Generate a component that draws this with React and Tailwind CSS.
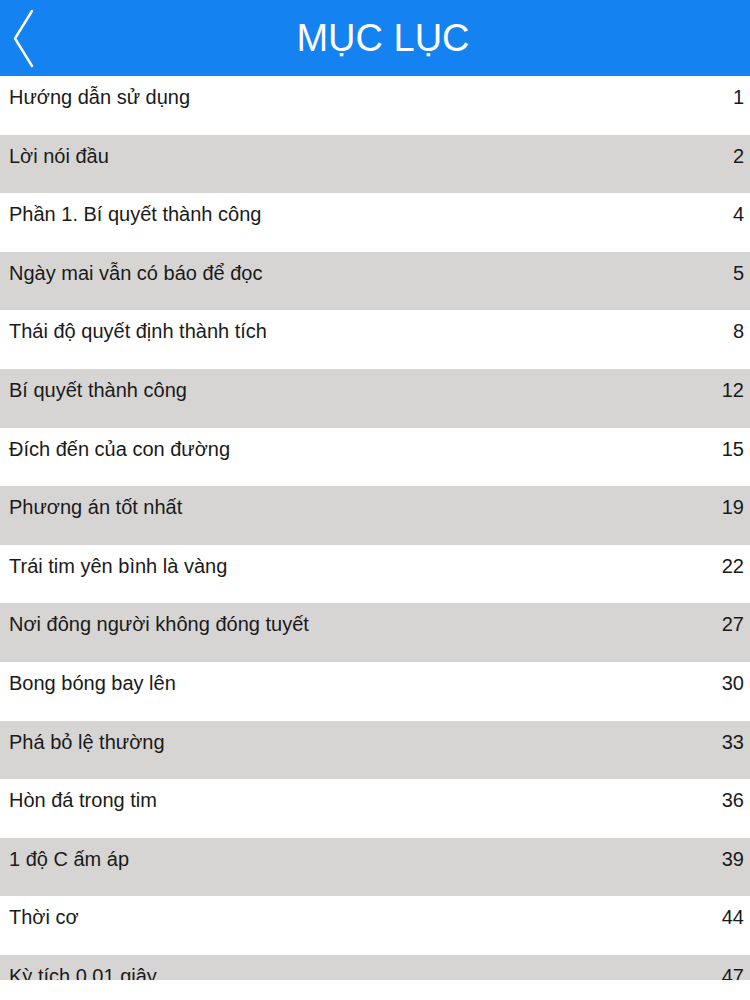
const chapters = [
  ['Hướng dẫn sử dụng', 1],
  ['Lời nói đầu', 2],
  ['Phần 1. Bí quyết thành công', 4],
  ['Ngày mai vẫn có báo để đọc', 5],
  ['Thái độ quyết định thành tích', 8],
  ['Bí quyết thành công', 12],
  ['Đích đến của con đường', 15],
  ['Phương án tốt nhất', 19],
  ['Trái tim yên bình là vàng', 22],
  ['Nơi đông người không đóng tuyết', 27],
  ['Bong bóng bay lên', 30],
  ['Phá bỏ lệ thường', 33],
  ['Hòn đá trong tim', 36],
  ['1 độ C ấm áp', 39],
  ['Thời cơ', 44],
  ['Kỳ tích 0.01 giây', 47],
]

function BackIcon() {
  return (
    <svg width="24" height="60" viewBox="0 0 24 60" fill="none">
      <path d="M19 3 L2 30.5 L19 58" stroke="white" strokeWidth="2.4" strokeLinecap="round" strokeLinejoin="round" />
    </svg>
  )
}

function ChapterRow({ title, page, shaded }) {
  return (
    <div
      className={`flex h-[58.6px] shrink-0 items-start justify-between pl-[9px] pr-[6px] pt-[9px] text-[20px] leading-[24px] text-[#1a1a1a] ${
        shaded ? 'bg-[#d6d5d4]' : 'bg-white'
      }`}
    >
      <span>{title}</span>
      <span>{page}</span>
    </div>
  )
}

export default function App() {
  return (
    <div className="flex h-[1000px] w-[750px] flex-col bg-white font-['Liberation_Sans',Arial,sans-serif]">
      <header className="flex h-[76px] shrink-0 items-center bg-[#1483f1]">
        <button className="flex w-[60px] items-center pl-[13px]" aria-label="Back">
          <BackIcon />
        </button>
        <h1 className="flex-1 pr-[44px] text-center text-[38px] font-normal leading-none text-white">
          MỤC LỤC
        </h1>
      </header>
      <div className="flex h-[904px] flex-col overflow-hidden">
        {chapters.map(([title, page], i) => (
          <ChapterRow key={title} title={title} page={page} shaded={i % 2 === 1} />
        ))}
      </div>
    </div>
  )
}
